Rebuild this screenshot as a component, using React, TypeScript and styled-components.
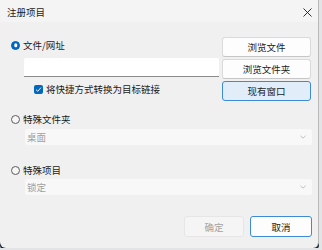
import React from 'react';
import styled, { createGlobalStyle } from 'styled-components';

const GlobalStyle = createGlobalStyle`
  html, body {
    margin: 0;
    padding: 0;
    background: #e2e4e6;
  }
  body {
    font-family: "Noto Sans CJK SC", "Noto Sans", sans-serif;
    font-size: 9.5px;
    color: #1b1b1b;
  }
`;

const Dialog = styled.div`
  width: 318px;
  height: 248px;
  background: #f0f0f0;
  border-right: 1px solid #b9b9b9;
  border-radius: 0 0 6px 6px;
  box-shadow: 0 3px 0 #1d2a35;
  display: flex;
  flex-direction: column;
  overflow: hidden;
`;

const TitleBar = styled.div`
  height: 22px;
  background: #f4f4f4;
  display: flex;
  align-items: center;
  justify-content: space-between;
  padding: 0 5px 0 7px;
  flex-shrink: 0;
`;

const Title = styled.span`
  line-height: 22px;
  margin-top: 2px;
`;

const CloseButton = styled.div`
  width: 12px;
  height: 12px;
  display: flex;
  align-items: center;
  justify-content: center;
  margin-top: 3px;
`;

const Body = styled.div`
  flex: 1;
  display: flex;
  flex-direction: column;
  padding: 15px 6px 0 11px;
`;

const TopSection = styled.div`
  display: flex;
  gap: 3px;
`;

const LeftColumn = styled.div`
  flex: 1;
  display: flex;
  flex-direction: column;
`;

const ButtonColumn = styled.div`
  width: 89px;
  display: flex;
  flex-direction: column;
  gap: 2px;
  margin-right: 1px;
`;

const OptionRow = styled.label<{ $top?: number }>`
  display: flex;
  align-items: center;
  gap: 3px;
  height: 16px;
  margin-top: ${(p) => p.$top ?? 0}px;
`;

const Radio = styled.span<{ $checked?: boolean }>`
  width: 9px;
  height: 9px;
  border-radius: 50%;
  box-sizing: border-box;
  flex-shrink: 0;
  position: relative;
  background: ${(p) => (p.$checked ? '#0067c0' : '#f6f6f6')};
  border: 1px solid ${(p) => (p.$checked ? '#0067c0' : '#5c5c5c')};

  &::after {
    content: '';
    display: ${(p) => (p.$checked ? 'block' : 'none')};
    position: absolute;
    left: 50%;
    top: 50%;
    width: 3.5px;
    height: 3.5px;
    border-radius: 50%;
    background: #ffffff;
    transform: translate(-50%, -50%);
  }
`;

const TextInput = styled.div`
  margin: 5px 0 0 13px;
  width: 195px;
  height: 19px;
  box-sizing: border-box;
  background: #ffffff;
  border-bottom: 1px solid #8c8c8c;
  border-radius: 2px 2px 0 0;
`;

const CheckRow = styled.label`
  display: flex;
  align-items: center;
  gap: 3px;
  height: 16px;
  margin: 4px 0 0 23px;
`;

const CheckBox = styled.span`
  width: 9px;
  height: 9px;
  border-radius: 2px;
  background: #0067c0;
  display: flex;
  align-items: center;
  justify-content: center;
  flex-shrink: 0;
`;

type ButtonProps = {
  $primary?: boolean;
  $focused?: boolean;
  $disabled?: boolean;
  $width?: number;
  $height?: number;
};

const Button = styled.button<ButtonProps>`
  height: ${(p) => p.$height ?? 20}px;
  width: ${(p) => (p.$width ? `${p.$width}px` : '100%')};
  box-sizing: border-box;
  padding: 0;
  font: inherit;
  font-size: 9.5px;
  border-radius: 3px;
  color: ${(p) => (p.$disabled ? '#a2a2a2' : '#1b1b1b')};
  background: ${(p) => (p.$primary ? '#e1edf8' : p.$disabled ? '#f5f5f5' : '#fdfdfd')};
  border: 1px solid
    ${(p) => (p.$primary || p.$focused ? '#3c8ad8' : p.$disabled ? '#e6e6e6' : '#dadada')};
  border-bottom-color: ${(p) =>
    p.$primary || p.$focused ? '#3c8ad8' : p.$disabled ? '#e6e6e6' : '#c6c6c6'};
`;

const Combo = styled.div<{ $top?: number }>`
  margin: ${(p) => p.$top ?? 2}px 0 0 14px;
  height: 16px;
  background: #f8f8f8;
  border-radius: 2px;
  display: flex;
  align-items: center;
  justify-content: space-between;
  padding: 0 6px 0 2px;
  color: #a0a0a0;
`;

const Footer = styled.div`
  display: flex;
  justify-content: flex-end;
  gap: 6px;
  margin-top: 21px;
`;

const Chevron: React.FC = () => (
  <svg width="6" height="4" viewBox="0 0 6 4">
    <path d="M0.5 0.8 L3 3.2 L5.5 0.8" fill="none" stroke="#a8a8a8" strokeWidth="0.7" />
  </svg>
);

const App: React.FC = () => {
  return (
    <>
      <GlobalStyle />
      <Dialog>
        <TitleBar>
          <Title>注册项目</Title>
          <CloseButton>
            <svg width="9" height="9" viewBox="0 0 9 9">
              <path d="M0.5 0.5 L8.5 8.5 M8.5 0.5 L0.5 8.5" stroke="#1b1b1b" strokeWidth="0.9" />
            </svg>
          </CloseButton>
        </TitleBar>
        <Body>
          <TopSection>
            <LeftColumn>
              <OptionRow>
                <Radio $checked />
                <span>文件/网址</span>
              </OptionRow>
              <TextInput />
              <CheckRow>
                <CheckBox>
                  <svg width="7" height="7" viewBox="0 0 7 7">
                    <path d="M1 3.6 L2.8 5.3 L6 1.6" fill="none" stroke="#ffffff" strokeWidth="0.9" />
                  </svg>
                </CheckBox>
                <span>将快捷方式转换为目标链接</span>
              </CheckRow>
            </LeftColumn>
            <ButtonColumn>
              <Button>浏览文件</Button>
              <Button>浏览文件夹</Button>
              <Button $primary>现有窗口</Button>
            </ButtonColumn>
          </TopSection>

          <OptionRow $top={10}>
            <Radio />
            <span>特殊文件夹</span>
          </OptionRow>
          <Combo $top={2}>
            <span>桌面</span>
            <Chevron />
          </Combo>

          <OptionRow $top={17}>
            <Radio />
            <span>特殊项目</span>
          </OptionRow>
          <Combo $top={1}>
            <span>锁定</span>
            <Chevron />
          </Combo>

          <Footer>
            <Button $disabled $width={60} $height={21}>确定</Button>
            <Button $focused $width={62} $height={21}>取消</Button>
          </Footer>
        </Body>
      </Dialog>
    </>
  );
};

export default App;
